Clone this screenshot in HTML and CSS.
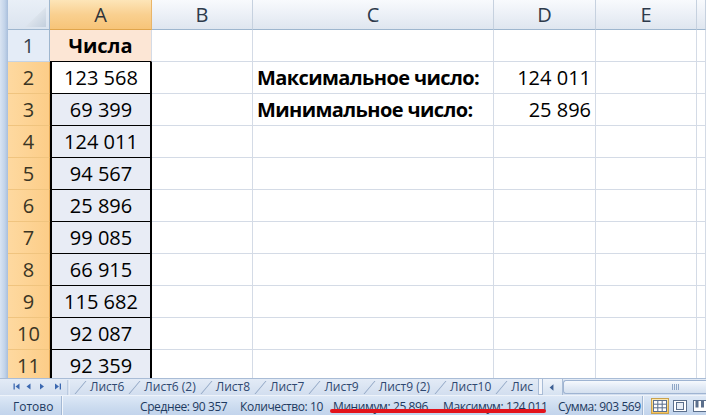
FILE: index.html
```html
<!DOCTYPE html>
<html lang="ru">
<head>
<meta charset="utf-8">
<title>Excel</title>
<link rel="stylesheet" href="styles.css">
</head>
<body>
<div class="app">
  <div class="sheet-area">
    <div class="edge"></div>
    <div class="sheet">
      <div class="corner">
        <svg width="22" height="20" viewBox="0 0 22 20"><defs><linearGradient id="tg" x1="0" y1="0" x2="1" y2="1"><stop offset="0" stop-color="#f4f7fb"/><stop offset="1" stop-color="#c3cfdd"/></linearGradient></defs><polygon points="21,0 21,20 0,20" fill="url(#tg)"/></svg>
      </div>
      <div class="colh sel">A</div>
      <div class="colh">B</div>
      <div class="colh">C</div>
      <div class="colh">D</div>
      <div class="colh">E</div>
      <div class="colh"></div>

      <div class="rowh">1</div>
      <div class="cell a1">Числа</div>
      <div class="cell"></div><div class="cell"></div><div class="cell"></div><div class="cell"></div><div class="cell"></div>

      <div class="rowh sel">2</div>
      <div class="cell sa active">123 568</div>
      <div class="cell"></div>
      <div class="cell bold">Максимальное число:</div>
      <div class="cell right">124 011</div>
      <div class="cell"></div><div class="cell"></div>

      <div class="rowh sel">3</div>
      <div class="cell sa">69 399</div>
      <div class="cell"></div>
      <div class="cell bold">Минимальное число:</div>
      <div class="cell right">25 896</div>
      <div class="cell"></div><div class="cell"></div>

      <div class="rowh sel">4</div>
      <div class="cell sa">124 011</div>
      <div class="cell"></div><div class="cell"></div><div class="cell"></div><div class="cell"></div><div class="cell"></div>

      <div class="rowh sel">5</div>
      <div class="cell sa">94 567</div>
      <div class="cell"></div><div class="cell"></div><div class="cell"></div><div class="cell"></div><div class="cell"></div>

      <div class="rowh sel">6</div>
      <div class="cell sa">25 896</div>
      <div class="cell"></div><div class="cell"></div><div class="cell"></div><div class="cell"></div><div class="cell"></div>

      <div class="rowh sel">7</div>
      <div class="cell sa">99 085</div>
      <div class="cell"></div><div class="cell"></div><div class="cell"></div><div class="cell"></div><div class="cell"></div>

      <div class="rowh sel">8</div>
      <div class="cell sa">66 915</div>
      <div class="cell"></div><div class="cell"></div><div class="cell"></div><div class="cell"></div><div class="cell"></div>

      <div class="rowh sel">9</div>
      <div class="cell sa">115 682</div>
      <div class="cell"></div><div class="cell"></div><div class="cell"></div><div class="cell"></div><div class="cell"></div>

      <div class="rowh sel">10</div>
      <div class="cell sa">92 087</div>
      <div class="cell"></div><div class="cell"></div><div class="cell"></div><div class="cell"></div><div class="cell"></div>

      <div class="rowh sel">11</div>
      <div class="cell sa">92 359</div>
      <div class="cell"></div><div class="cell"></div><div class="cell"></div><div class="cell"></div><div class="cell"></div>
    </div>
  </div>

  <div class="tabbar">
    <div class="nav">
      <svg width="70" height="17" viewBox="0 0 70 17">
        <g fill="#3c68b0">
          <rect x="13.5" y="5.5" width="1.3" height="6"/>
          <polygon points="15.5,8.5 19.5,5.5 19.5,11.5"/>
          <polygon points="26.5,8.5 30.5,5.5 30.5,11.5"/>
          <polygon points="44,8.5 40,5.5 40,11.5"/>
          <polygon points="59,8.5 55,5.5 55,11.5"/>
          <rect x="59.7" y="5.5" width="1.3" height="6"/>
        </g>
        <rect x="67.5" y="2" width="1" height="15" fill="#9fb3cf"/>
        <rect x="68.5" y="2" width="1" height="15" fill="#f4f8fd"/>
      </svg>
    </div>
    <div class="tabs">
      <span class="tab">Лист6</span>
      <span class="tab">Лист6 (2)</span>
      <span class="tab">Лист8</span>
      <span class="tab">Лист7</span>
      <span class="tab">Лист9</span>
      <span class="tab">Лист9 (2)</span>
      <span class="tab">Лист10</span>
      <span class="tab">Лис</span>
    </div>
    <div class="hscroll">
      <div class="split"></div>
      <div class="arrow">
        <svg width="20" height="15" viewBox="0 0 20 15"><polygon points="7,7.5 11,4 11,11" fill="#3c5f93"/></svg>
      </div>
      <div class="thumb">
        <svg width="8" height="8" viewBox="0 0 8 8"><g fill="#8ea6c6"><rect x="0" y="1" width="1" height="6"/><rect x="2" y="1" width="1" height="6"/><rect x="4" y="1" width="1" height="6"/><rect x="6" y="1" width="1" height="6"/></g></svg>
      </div>
    </div>
  </div>

  <div class="status">
    <span class="ready">Готово</span>
    <span class="sep"></span>
    <div class="stats">
      <span class="st st-avg">Среднее: 90 357</span>
      <span class="st st-cnt">Количество: 10</span>
      <span class="st st-min">Минимум: 25 896</span>
      <span class="st st-max">Максимум: 124 011</span>
      <span class="st st-sum">Сумма: 903 569</span>
    </div>
    <span class="sep"></span>
    <div class="views">
      <span class="vbtn on">
        <svg width="14" height="12" viewBox="0 0 14 12"><rect x="0.5" y="0.5" width="13" height="11" fill="#fff" stroke="#5b6f8c"/><path d="M0.5 4.2H13.5M0.5 7.8H13.5M4.8 0.5V11.5M9.2 0.5V11.5" stroke="#5b6f8c" fill="none"/></svg>
      </span>
      <span class="vbtn">
        <svg width="14" height="12" viewBox="0 0 14 12"><rect x="0.5" y="0.5" width="13" height="11" fill="#fff" stroke="#5b6f8c"/><rect x="3.5" y="2.5" width="7" height="7" fill="#e8eef6" stroke="#5b6f8c"/></svg>
      </span>
      <span class="vbtn">
        <svg width="14" height="12" viewBox="0 0 14 12"><rect x="0.5" y="0.5" width="13" height="11" fill="#fff" stroke="#5b6f8c"/><rect x="2.5" y="0.5" width="3" height="7" fill="#5b6f8c"/><rect x="8" y="0.5" width="3" height="7" fill="#5b6f8c"/></svg>
      </span>
    </div>
    <span class="redline"></span>
  </div>
</div>
</body>
</html>
```

FILE: styles.css
```css
* {
  box-sizing: border-box;
}

html, body {
  margin: 0;
  padding: 0;
}

body {
  width: 706px;
  height: 415px;
  overflow: hidden;
  background: #ffffff;
  font-family: "Open Sans", "Noto Sans", sans-serif;
}

.app {
  display: flex;
  flex-direction: column;
  width: 706px;
  height: 415px;
}

/* ---------- sheet ---------- */
.sheet-area {
  display: flex;
  height: 378px;
  overflow: hidden;
  flex: none;
}

.edge {
  width: 8px;
  flex: none;
  background: linear-gradient(to right, #d9e4f2, #c2d3e9 60%, #a8bedb);
}

.sheet {
  flex: 1;
  display: grid;
  grid-template-columns: 42px 102px 101px 241px 102px 101px 1fr;
  grid-template-rows: 30px repeat(11, 32px);
  align-content: start;
}

.corner {
  background: linear-gradient(#e9eff7, #dbe4ef);
  border-right: 1px solid #9eb6ce;
  border-bottom: 1px solid #9eb6ce;
  display: flex;
  align-items: flex-end;
  justify-content: flex-end;
  padding: 0 2px 2px 0;
}

.corner svg {
  display: block;
}

.colh {
  background: linear-gradient(#f8fafd, #edf1f7 45%, #dfe6ef);
  border-right: 1px solid #c6d1df;
  border-bottom: 1px solid #9eb6ce;
  text-align: center;
  font-size: 20px;
  line-height: 29px;
  color: #2d3a4b;
}

.colh.sel {
  background: linear-gradient(#fde5b8, #f9d090 50%, #f7c478);
  border-right-color: #e9b568;
  border-bottom-color: #e0a54c;
  color: #2f3338;
}

.rowh {
  background: #e4ecf7;
  border-right: 1px solid #9eb6ce;
  border-bottom: 1px solid #c5d3e4;
  text-align: center;
  font-size: 20px;
  line-height: 31px;
  color: #353e4c;
}

.rowh.sel {
  background: linear-gradient(to right, #fed9a0, #fccd88);
  border-right-color: #e6ab58;
  border-bottom-color: #f0c47f;
  color: #3a3524;
}

.cell {
  border-right: 1px solid #d4dbe6;
  border-bottom: 1px solid #d4dbe6;
  font-size: 20px;
  line-height: 31px;
  padding: 0 4px;
  white-space: nowrap;
  overflow: hidden;
  color: #000000;
}

.a1 {
  background: #fce6d5;
  font-weight: bold;
  text-align: center;
  border-bottom-color: #000000;
}

.sa {
  background: #e8ecf5;
  border-left: 2px solid #000000;
  border-right: 2px solid #000000;
  border-bottom: 1px solid #000000;
  text-align: center;
  padding: 0;
}

.sa.active {
  background: #ffffff;
}

.bold {
  font-weight: bold;
  letter-spacing: -0.6px;
}

.right {
  text-align: right;
}

/* ---------- sheet tabs ---------- */
.tabbar {
  height: 17px;
  flex: none;
  display: flex;
  background: linear-gradient(#e3ebf6, #d2deef);
  border-top: 1px solid #a9bcd6;
  overflow: hidden;
}

.nav {
  flex: none;
  width: 70px;
  height: 16px;
}

.nav svg {
  display: block;
  margin-top: -1px;
}

.tabs {
  flex: none;
  width: 468px;
  display: flex;
  white-space: nowrap;
  font-size: 12px;
  line-height: 16px;
  letter-spacing: 0;
  color: #2f4870;
}

.tab {
  display: inline-flex;
  align-items: center;
  flex: none;
}

.tab::before {
  content: "";
  display: inline-block;
  width: 1px;
  height: 13px;
  margin: 0 9px 0 10px;
  background: #8ea4c3;
  transform: skewX(-40deg);
}

.hscroll {
  flex: 1;
  display: flex;
  height: 16px;
}

.split {
  width: 5px;
  flex: none;
  background: #f3f6fb;
  border: 1px solid #a9bcd6;
  border-top: none;
}

.arrow {
  width: 20px;
  flex: none;
  display: flex;
  align-items: center;
  justify-content: center;
  background: linear-gradient(#eef3fa, #d6e2f1);
  border-right: 1px solid #a9bcd6;
}

.arrow svg {
  display: block;
}

.thumb {
  flex: 1;
  margin: 1px 0 1px 0;
  border: 1px solid #9fb4d2;
  border-right: none;
  border-radius: 3px 0 0 3px;
  background: linear-gradient(#f6f9fd, #e3ebf6 50%, #d4e0ef);
  display: flex;
  align-items: center;
  padding-left: 108px;
}

.thumb svg {
  display: block;
}

/* ---------- status bar ---------- */
.status {
  position: relative;
  height: 20px;
  flex: none;
  display: flex;
  align-items: center;
  background: linear-gradient(#dde8f6, #cbdbef 60%, #c2d4ec);
  border-top: 1px solid #eef3fa;
  font-size: 12px;
  color: #1d3a60;
  white-space: nowrap;
}

.ready {
  padding-left: 13px;
  padding-top: 1px;
}

.sep {
  width: 2px;
  height: 20px;
  flex: none;
  border-left: 1px solid #a3b8d4;
  border-right: 1px solid #f2f6fb;
}

.ready + .sep {
  margin-left: 8px;
}

.stats {
  flex: 1;
  display: flex;
  justify-content: flex-end;
  padding-top: 1px;
}

.st {
  flex: none;
  letter-spacing: -0.4px;
  overflow: hidden;
}

.st-avg { width: 100px; }
.st-cnt { width: 93px; }
.st-min { width: 110px; }
.st-max { width: 115px; }
.st-sum { width: 84px; }

.views {
  display: flex;
  align-items: center;
  gap: 2px;
  padding-left: 7px;
  width: 62px;
  flex: none;
}

.vbtn {
  width: 18px;
  height: 16px;
  display: flex;
  align-items: center;
  justify-content: center;
  flex: none;
}

.vbtn.on {
  background: linear-gradient(#fde8b0, #fbd57c 50%, #f8c35a);
  border: 1px solid #c9a24f;
}

.vbtn svg {
  display: block;
}

.redline {
  position: absolute;
  left: 330px;
  top: 13px;
  width: 216px;
  height: 4px;
  border-radius: 2px;
  background: #e3131b;
}
```
